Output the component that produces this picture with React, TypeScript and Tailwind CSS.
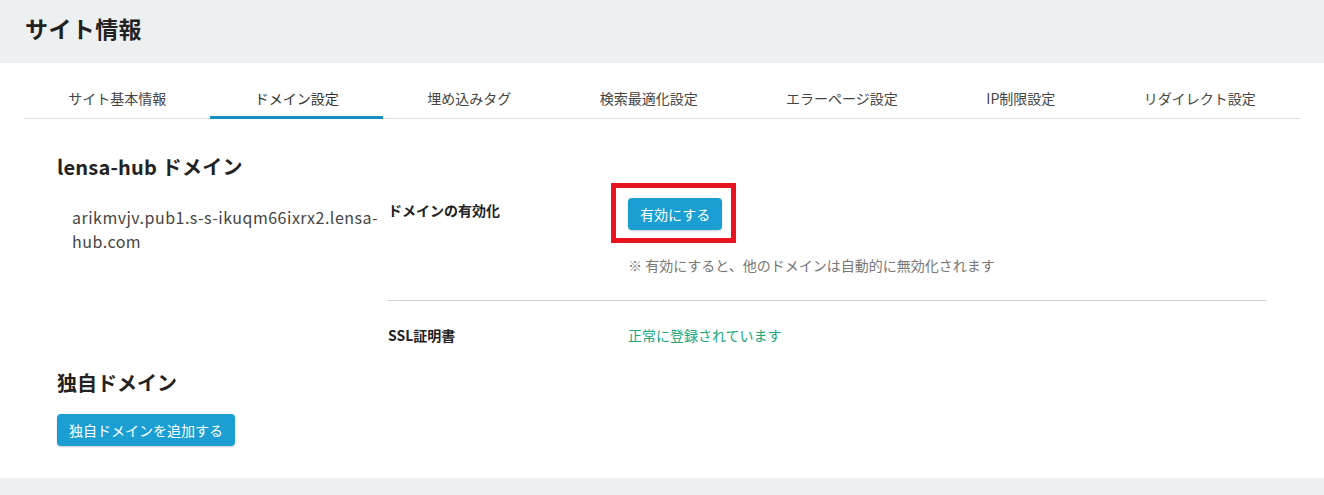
import React from "react";

const tabs = [
  "サイト基本情報",
  "ドメイン設定",
  "埋め込みタグ",
  "検索最適化設定",
  "エラーページ設定",
  "IP制限設定",
  "リダイレクト設定",
];

export default function App() {
  return (
    <div
      className="w-[1324px] min-h-[495px] bg-[#edf0f1] text-[#333]"
      style={{ fontFamily: '"Noto Sans CJK JP", "Noto Sans", sans-serif' }}
    >
      <header className="h-[63px] px-[25px] pt-[14px]">
        <h1 className="text-[23px] leading-[28px] font-bold text-[#222] tracking-[0.4px]">サイト情報</h1>
      </header>

      <main className="bg-white px-[24px] pt-[16px] pb-[32px]">
        <nav className="flex border-b border-[#dedede]">
          {tabs.map((t, i) => (
            <div
              key={t}
              className={
                i === 1
                  ? "flex-auto text-center text-[14px] leading-[20px] pt-[9px] pb-[8px] border-b-[3px] border-[#1590c4] text-[#333] -mb-px"
                  : "flex-auto text-center text-[14px] leading-[20px] pt-[9px] pb-[8px] border-b-[3px] border-transparent text-[#444] -mb-px"
              }
            >
              {t}
            </div>
          ))}
        </nav>

        <div className="px-[33px]">
          <h2 className="mt-[33px] text-[20px] leading-[30px] font-bold text-[#222] tracking-[0.2px]">lensa-hub ドメイン</h2>

          <div className="flex mt-[16px]">
            <div className="w-[331px] shrink-0 pl-[15px] pt-[7px] text-[16px] leading-[24px] text-[#444] whitespace-nowrap tracking-[0.5px]">
              arikmvjv.pub1.s-s-ikuqm66ixrx2.lensa-
              <br />
              hub.com
            </div>

            <div className="flex-1">
              <div className="flex border-b border-[#ccd3d3] pb-[25px]">
                <div className="w-[240px] shrink-0 pt-[2px] text-[14px] leading-[20px] font-bold text-[#222]">
                  ドメインの有効化
                </div>
                <div>
                  <div className="relative inline-block">
                    <button className="h-[32px] px-[12px] rounded-[4px] bg-[#1b9fd2] text-white text-[14px] leading-[20px] shadow-[0_1px_2px_rgba(0,0,0,0.2)]">
                      有効にする
                    </button>
                    <div className="pointer-events-none absolute -left-[17px] -right-[14px] -top-[15px] -bottom-[13px] border-[5px] border-[#e8141f]" />
                  </div>
                  <p className="mt-[25px] text-[14px] leading-[20px] text-[#777]">
                    ※ 有効にすると、他のドメインは自動的に無効化されます
                  </p>
                </div>
              </div>

              <div className="flex pt-[24px]">
                <div className="w-[240px] shrink-0 text-[14px] leading-[20px] font-bold text-[#222]">SSL証明書</div>
                <div className="text-[14px] leading-[20px] text-[#20a57c]">正常に登録されています</div>
              </div>
            </div>
          </div>

          <h2 className="mt-[23px] text-[20px] leading-[30px] font-bold text-[#222]">独自ドメイン</h2>

          <button className="mt-[16px] h-[32px] px-[12px] rounded-[4px] bg-[#1b9fd2] text-white text-[14px] leading-[20px] shadow-[0_1px_2px_rgba(0,0,0,0.2)]">
            独自ドメインを追加する
          </button>
        </div>
      </main>
    </div>
  );
}
